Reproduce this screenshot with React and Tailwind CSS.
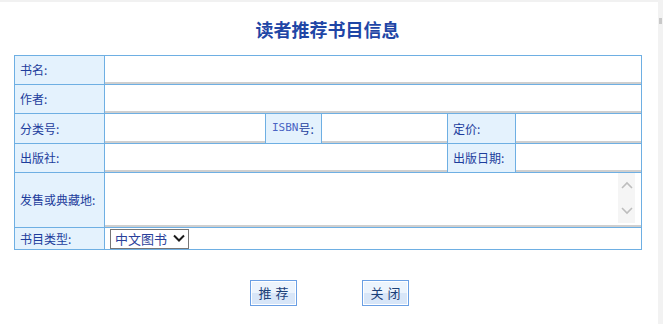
import React from 'react';

const font = { fontFamily: '"Noto Sans CJK SC", "Noto Sans", sans-serif' };

const Label = ({ children, className = '' }) => (
    <div className={`flex items-center pl-[5px] bg-[#e4f2fd] border-r border-b border-[#6eafe3] text-[12px] text-[#1d3d9c] ${className}`}>
        {children}
    </div>
);

const Field = ({ className = '' }) => (
    <div className={`flex border-r border-b border-[#6eafe3] bg-white ${className}`}>
        <div className="flex-1 border-b-2 border-[#cfcfcf] bg-white" />
    </div>
);

const Chevron = ({ up }) => (
    <svg width="12" height="8" viewBox="0 0 12 8" fill="none" stroke="#bdbdbd" strokeWidth="1.6">
        {up ? <path d="M1 7 L6 2 L11 7" /> : <path d="M1 1 L6 6 L11 1" />}
    </svg>
);

const Button = ({ children }) => (
    <button className="w-[47px] h-[26px] border border-[#6a9fe4] p-0 bg-white">
        <div className="h-full border border-white bg-[linear-gradient(#ecf4fd_0%,#ecf4fd_50%,#d8e6f8_50%,#d8e6f8_100%)] flex items-center justify-center text-[13px] text-[#1a3f78] tracking-[4px] pl-[4px]">
            {children}
        </div>
    </button>
);

export default function App() {
    return (
        <div className="w-[663px] h-[324px] bg-white flex overflow-hidden" style={font}>
            <div className="w-[658px] flex flex-col border-t-2 border-[#f1f1f1]">
                <div className="w-[655px] flex flex-col">
                    <h1 className="h-[53px] flex items-center justify-center text-[18px] font-bold text-[#1f46a6] pt-[1px]">
                        读者推荐书目信息
                    </h1>

                    <div className="ml-[14px] w-[628px] grid grid-cols-[90px_161px_56px_126px_68px_126px] grid-rows-[29px_29px_30px_29px_55px_22px] border-t border-l border-[#6eafe3]">
                        <Label>书名:</Label>
                        <Field className="col-span-5" />

                        <Label>作者:</Label>
                        <Field className="col-span-5" />

                        <Label>分类号:</Label>
                        <Field />
                        <Label className="pl-[6px]">
                            <span className="text-[11px] text-[#4a64c4]" style={{ fontFamily: '"DejaVu Sans Mono", monospace' }}>ISBN</span>号:
                        </Label>
                        <Field />
                        <Label>定价:</Label>
                        <Field />

                        <Label>出版社:</Label>
                        <Field className="col-span-3" />
                        <Label>出版日期:</Label>
                        <Field />

                        <Label>发售或典藏地:</Label>
                        <div className="col-span-5 flex border-r border-b border-[#6eafe3] bg-white">
                            <div className="flex-1 flex border-b-2 border-[#cfcfcf] pr-[6px]">
                                <div className="flex-1" />
                                <div className="w-[17px] h-[50px] bg-[#f5f5f5] flex flex-col items-center justify-between py-[8px]">
                                    <Chevron up />
                                    <Chevron />
                                </div>
                            </div>
                        </div>

                        <Label>书目类型:</Label>
                        <div className="col-span-5 flex items-center pl-[5px] border-r border-b border-[#6eafe3] bg-white">
                            <div className="w-[79px] h-[20px] border border-[#767676] flex items-center justify-between pl-[4px] pr-[3px] text-[13px] text-[#2a3f9a]">
                                <span>中文图书</span>
                                <svg width="12" height="9" viewBox="0 0 12 9" fill="none" stroke="#1a1a1a" strokeWidth="2">
                                    <path d="M1 1.5 L6 6.5 L11 1.5" />
                                </svg>
                            </div>
                        </div>
                    </div>

                    <div className="flex justify-center gap-[65px] mt-[30px] pl-[4px]">
                        <Button>推荐</Button>
                        <Button>关闭</Button>
                    </div>
                </div>
            </div>
            <div className="flex-1 bg-[#f2f2f2] flex flex-col items-center pt-[18px]">
                <div className="w-[3px] h-[6px] bg-[#c9c9c9]" />
            </div>
        </div>
    );
}
